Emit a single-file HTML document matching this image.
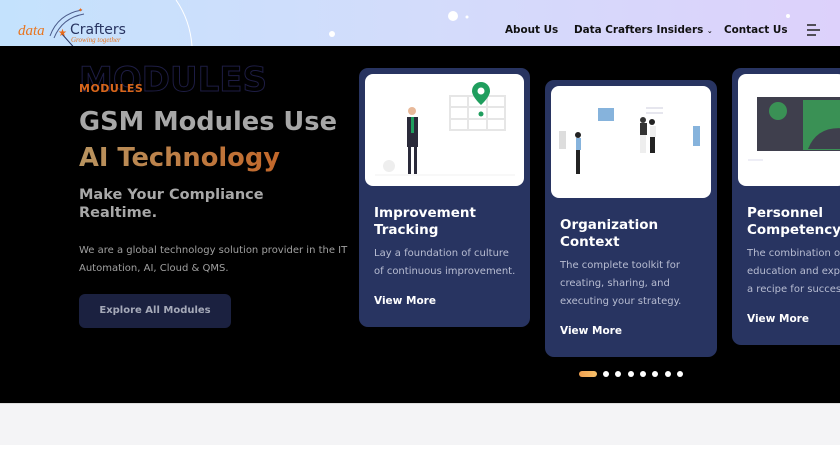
<!DOCTYPE html>
<html><head><meta charset="utf-8"><style>
*{margin:0;padding:0;box-sizing:border-box}
body{width:840px;height:472px;overflow:hidden;background:#fff;font-family:"DejaVu Sans","Liberation Sans",sans-serif;position:relative}
.hdr{position:absolute;left:0;top:0;width:840px;height:46px;background:linear-gradient(90deg,#c4e2fd 0%,#d3dcfb 50%,#ddd1fb 100%);overflow:hidden}
.nav{position:absolute;top:24px;font-size:10.4px;font-weight:bold;color:#111;white-space:nowrap}
.hero{position:absolute;left:0;top:46px;width:840px;height:357px;background:#000;overflow:hidden}
.gray{position:absolute;left:0;top:403px;width:840px;height:42px;background:#f4f4f6;border-top:1px solid #ddd}
.card{position:absolute;background:#283461;border-radius:9px}
.img{position:absolute;left:6px;top:6px;right:6px;background:#fff;border-radius:8px;overflow:hidden}
.ct{position:absolute;left:15px;color:#fff;font-weight:bold;font-size:13.5px;line-height:17px}
.cd{position:absolute;left:15px;color:#b8bdd2;font-size:10px;line-height:18px}
.cv{position:absolute;left:15px;color:#fff;font-weight:bold;font-size:10.5px}
.dot{position:absolute;top:371px;width:6px;height:6px;border-radius:50%;background:#fff}
</style></head><body>
<div class="hdr">
 <svg width="840" height="46" style="position:absolute;left:0;top:0">
  <path d="M176 0 Q190 20 192 46" stroke="#fff" stroke-width="1" fill="none"/>
  <circle cx="453" cy="16" r="5" fill="#fff"/><circle cx="467" cy="17" r="1.5" fill="#fff"/>
  <circle cx="332" cy="34" r="3" fill="#fff"/><circle cx="788" cy="16" r="2" fill="#fff"/>
  <path d="M50 36 Q58 14 82 10" stroke="#4a5a8a" fill="none"/>
  <path d="M54 38 Q62 18 84 14" stroke="#4a5a8a" fill="none"/>
  <path d="M62 34 L78 52" stroke="#283461" stroke-width="1"/>
  <text x="58" y="36" fill="#e86a1a" font-size="10">★</text>
  <text x="78" y="12" fill="#e86a1a" font-size="6">✦</text>
  <line x1="807" y1="25" x2="816" y2="25" stroke="#222" stroke-width="1.5"/>
  <line x1="807" y1="30" x2="820" y2="30" stroke="#222" stroke-width="1.5"/>
  <line x1="807" y1="35" x2="816" y2="35" stroke="#222" stroke-width="1.5"/>
 </svg>
 <div style="position:absolute;left:18px;top:23px;font-family:'Liberation Serif',serif;font-style:italic;font-size:15px;color:#e8751f">data</div>
 <div style="position:absolute;left:70px;top:22px;font-size:14px;color:#283461;font-weight:500">Crafters</div>
 <div style="position:absolute;left:71px;top:36px;font-family:'Liberation Serif',serif;font-style:italic;font-size:7px;color:#e8751f">Growing together</div>
 <div class="nav" style="left:505px">About Us</div>
 <div class="nav" style="left:574px">Data Crafters Insiders <span style="font-size:7px">⌄</span></div>
 <div class="nav" style="left:724px">Contact Us</div>
</div>
<div class="hero">
 <div style="position:absolute;left:79px;top:14px;font-size:34px;font-weight:bold;color:transparent;-webkit-text-stroke:1px #1e1d45">MODULES</div>
 <div style="position:absolute;left:79px;top:36px;font-size:11px;font-weight:bold;color:#d8661b;letter-spacing:.5px">MODULES</div>
 <div style="position:absolute;left:79px;top:61px;font-size:25.7px;font-weight:bold;color:#a7a7a7">GSM Modules Use</div>
 <div style="position:absolute;left:79px;top:97px;font-size:25.7px;font-weight:bold;background:linear-gradient(90deg,#b89460,#c2672a);-webkit-background-clip:text;color:transparent">AI Technology</div>
 <div style="position:absolute;left:79px;top:140px;font-size:14.5px;font-weight:bold;color:#a8a8a8;line-height:18px">Make Your Compliance<br>Realtime.</div>
 <div style="position:absolute;left:79px;top:196px;font-size:10px;color:#a0a0a0;line-height:18px">We are a global technology solution provider in the IT<br>Automation, AI, Cloud &amp; QMS.</div>
 <div style="position:absolute;left:79px;top:248px;width:152px;height:34px;border-radius:6px;background:#1b2140;color:#a5a9b8;font-size:10px;font-weight:bold;text-align:center;line-height:34px">Explore All Modules</div>

 <div class="card" style="left:359px;top:22px;width:171px;height:259px">
  <div class="img" style="height:112px">
   <svg width="159" height="112"><g stroke="#e6e6e6" fill="none" stroke-width="2"><rect x="85" y="22" width="55" height="34"/><line x1="85" y1="33" x2="140" y2="33"/><line x1="85" y1="45" x2="140" y2="45"/><line x1="103" y1="22" x2="103" y2="56"/><line x1="122" y1="22" x2="122" y2="56"/></g>
   <path d="M116 8 a9 9 0 0 1 9 9 c0 6 -9 14 -9 14 c0 0 -9 -8 -9 -14 a9 9 0 0 1 9 -9z" fill="#1f9e5e"/><circle cx="116" cy="17" r="3.5" fill="#fff"/><circle cx="116" cy="40" r="2.5" fill="#1f9e5e"/>
   <circle cx="47" cy="37" r="4" fill="#e8b99a"/><rect x="42" y="43" width="11" height="30" fill="#2a2a3a"/><rect x="46" y="43" width="3" height="16" fill="#1f9e5e"/><rect x="43" y="72" width="3" height="28" fill="#2a2a3a"/><rect x="49" y="72" width="3" height="28" fill="#2a2a3a"/>
   <circle cx="24" cy="92" r="6" fill="#eee"/><line x1="10" y1="101" x2="150" y2="101" stroke="#f0f0f0"/></svg>
  </div>
  <div class="ct" style="top:137px">Improvement<br>Tracking</div>
  <div class="cd" style="top:177px">Lay a foundation of culture<br>of continuous improvement.</div>
  <div class="cv" style="top:227px">View More</div>
 </div>
 <div class="card" style="left:545px;top:34px;width:172px;height:277px">
  <div class="img" style="height:112px">
   <svg width="160" height="112"><rect x="47" y="22" width="16" height="13" fill="#86b3dc"/><rect x="8" y="45" width="7" height="18" fill="#ddd"/><rect x="142" y="40" width="7" height="20" fill="#86b3dc"/>
   <circle cx="27" cy="49" r="3" fill="#222"/><rect x="25" y="52" width="5" height="12" fill="#86b3dc"/><rect x="25" y="64" width="4" height="24" fill="#222"/>
   <circle cx="92" cy="34" r="3" fill="#333"/><rect x="89" y="37" width="7" height="12" fill="#333"/><rect x="89" y="49" width="6" height="18" fill="#eee"/>
   <circle cx="101" cy="36" r="3" fill="#222"/><rect x="99" y="40" width="6" height="11" fill="#eee"/><rect x="99" y="51" width="5" height="16" fill="#222"/>
   <line x1="95" y1="22" x2="112" y2="22" stroke="#ccd" /><line x1="95" y1="27" x2="112" y2="27" stroke="#ccd"/></svg>
  </div>
  <div class="ct" style="top:137px">Organization<br>Context</div>
  <div class="cd" style="top:177px">The complete toolkit for<br>creating, sharing, and<br>executing your strategy.</div>
  <div class="cv" style="top:245px">View More</div>
 </div>
 <div class="card" style="left:732px;top:22px;width:120px;height:277px">
  <div class="img" style="height:112px">
   <svg width="120" height="112"><rect x="19" y="23" width="44" height="54" fill="#3f3f4d"/><rect x="63" y="23" width="50" height="54" fill="#3f3f4d"/><rect x="65" y="26" width="45" height="50" fill="#3a9155"/><circle cx="40" cy="37" r="9" fill="#3a9155"/><path d="M70 75 q10 -25 40 -20 v20z" fill="#3f3f4d"/><line x1="10" y1="86" x2="25" y2="86" stroke="#dde"/></svg>
  </div>
  <div class="ct" style="top:137px;white-space:nowrap">Personnel<br>Competency</div>
  <div class="cd" style="top:177px;white-space:nowrap">The combination of<br>education and expe<br>a recipe for success</div>
  <div class="cv" style="top:245px">View More</div>
 </div>
</div>
<div style="position:absolute;left:579px;top:371px;width:18px;height:6px;border-radius:3px;background:linear-gradient(90deg,#f0a050,#f6c06a)"></div>
<div class="dot" style="left:603px"></div><div class="dot" style="left:615px"></div><div class="dot" style="left:628px"></div><div class="dot" style="left:640px"></div><div class="dot" style="left:652px"></div><div class="dot" style="left:665px"></div><div class="dot" style="left:677px"></div>
<div class="gray"></div>
</body></html>
